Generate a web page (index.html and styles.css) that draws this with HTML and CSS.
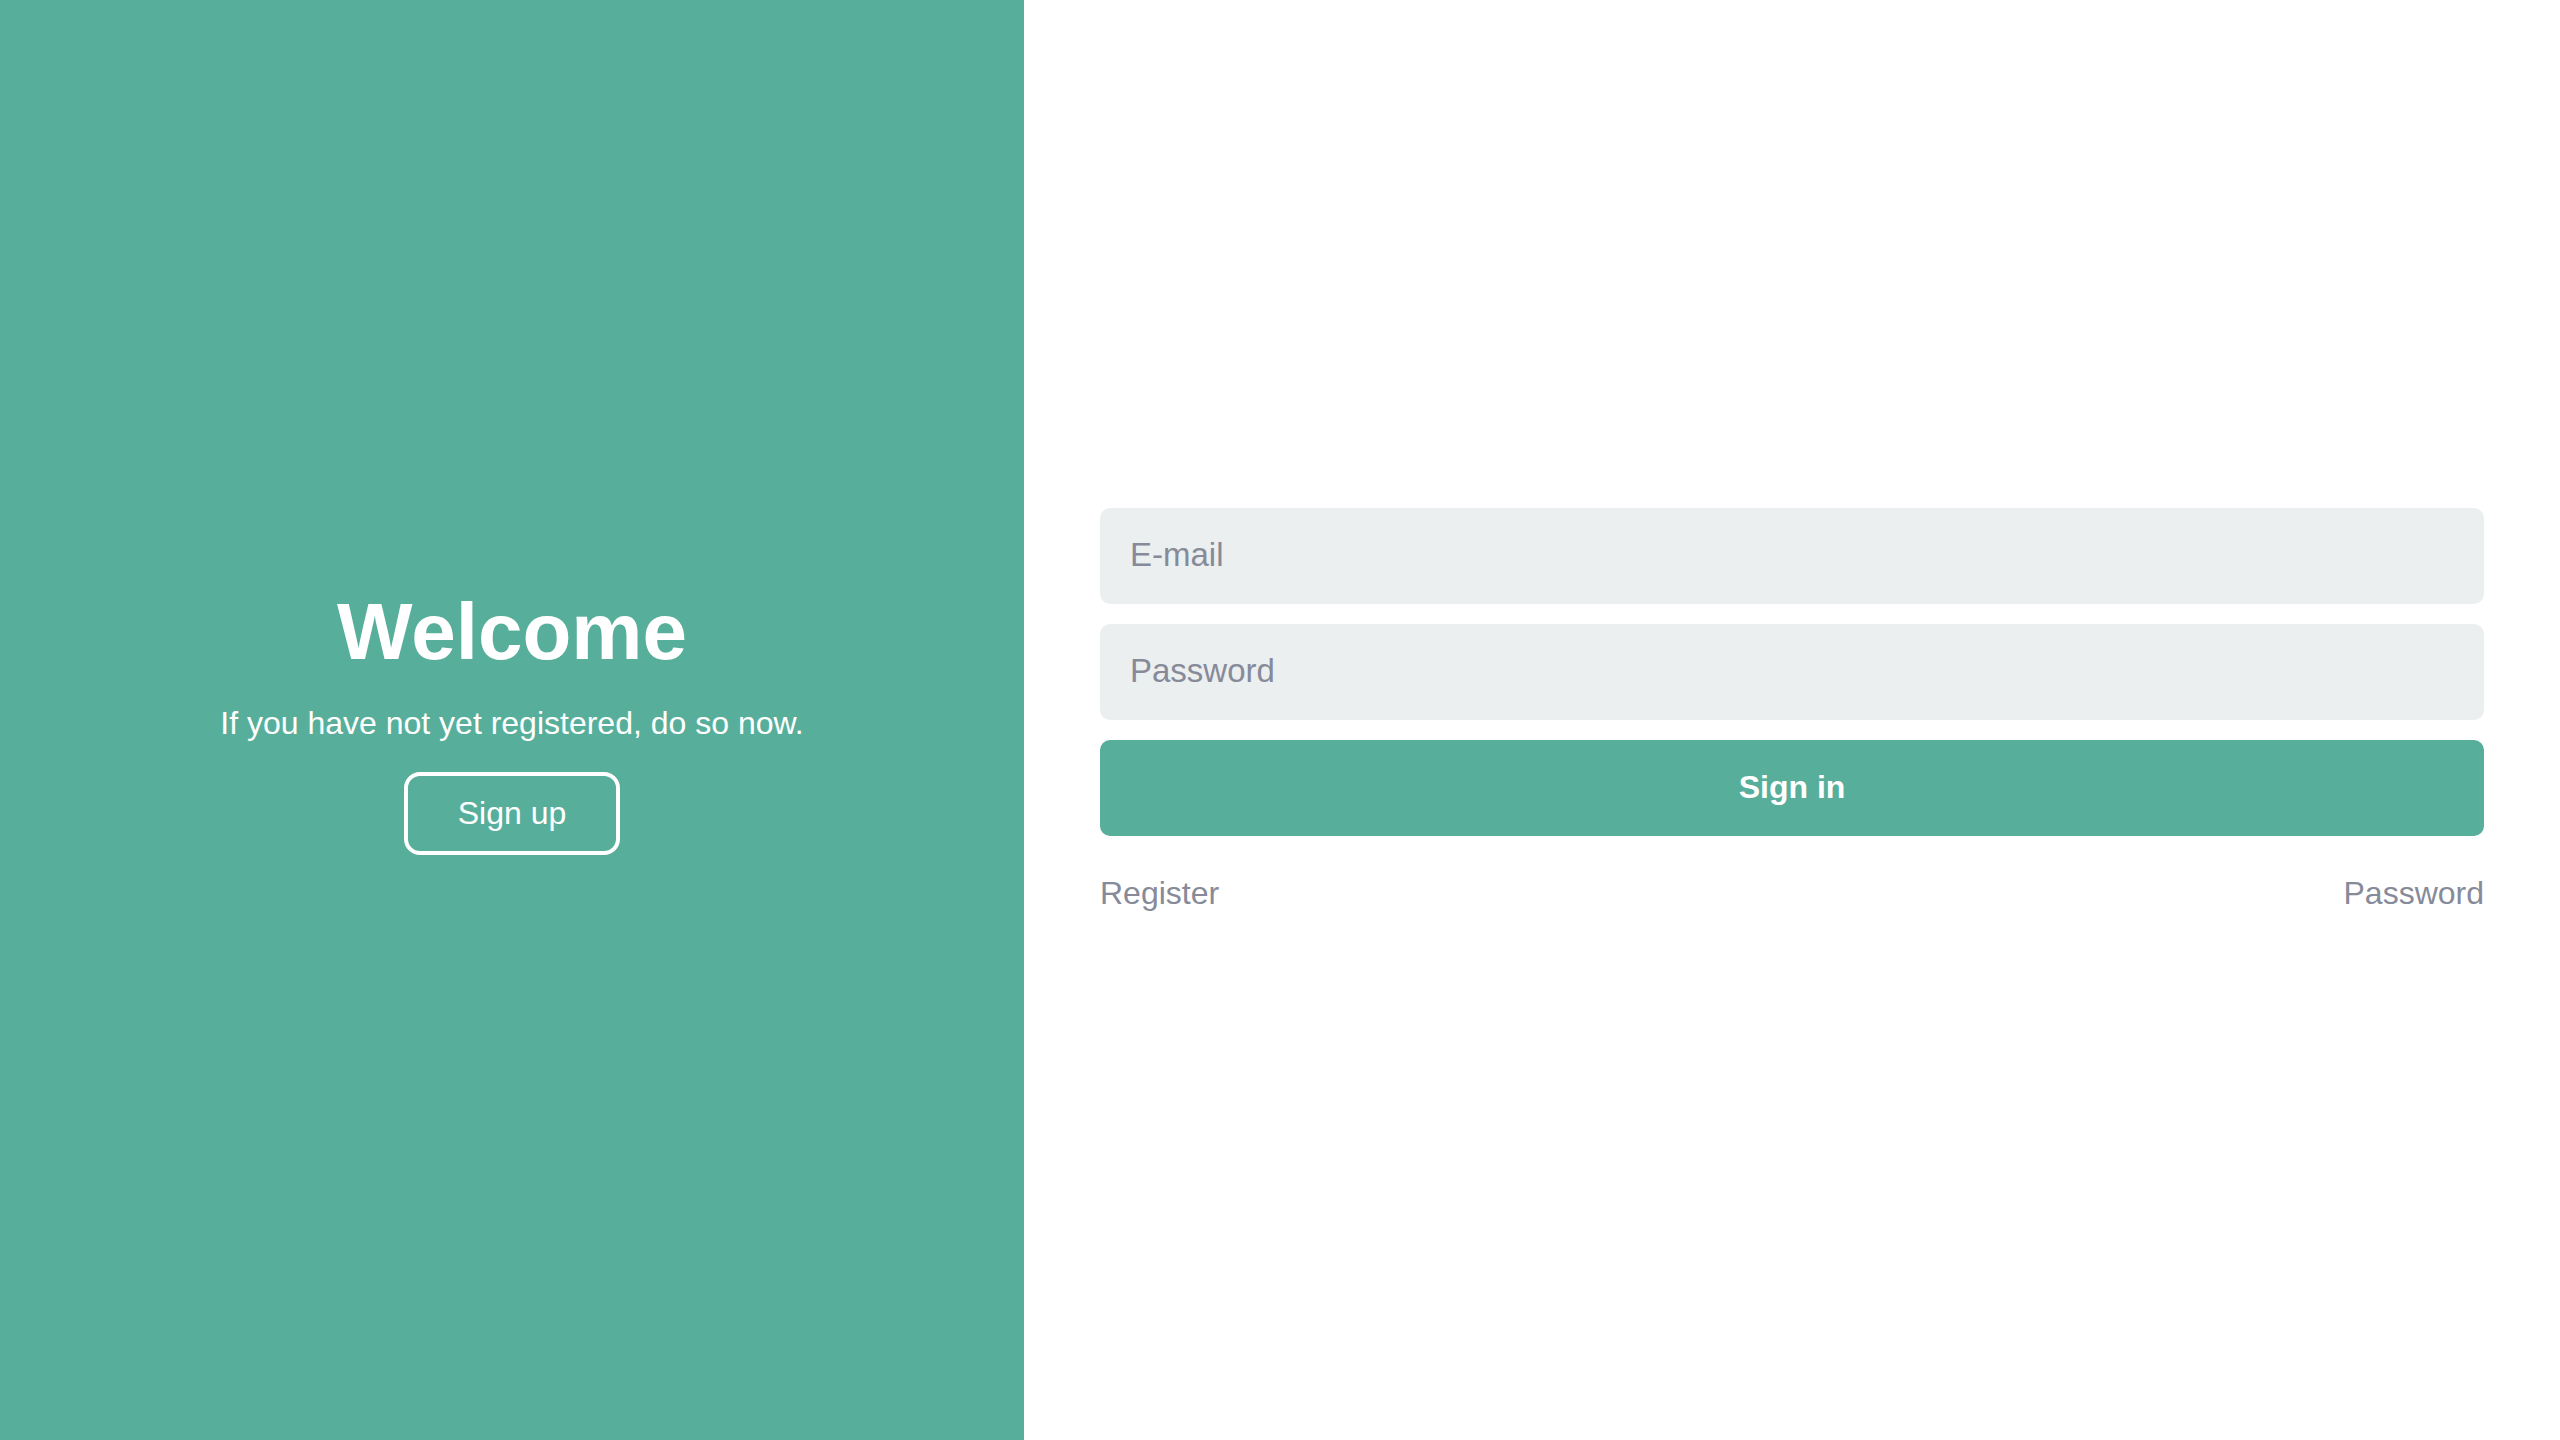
FILE: index.html
```html
<!DOCTYPE html>
<html lang="en">
<head>
<meta charset="utf-8">
<title>Sign in</title>
<link rel="stylesheet" href="styles.css">
</head>
<body>
<div class="page">
  <section class="welcome">
    <h1 class="welcome-title">Welcome</h1>
    <p class="welcome-text">If you have not yet registered, do so now.</p>
    <button class="btn-outline" type="button">Sign up</button>
  </section>
  <section class="auth">
    <form class="auth-form">
      <input class="field" type="email" placeholder="E-mail">
      <input class="field" type="password" placeholder="Password">
      <button class="btn-primary" type="button">Sign in</button>
      <div class="auth-links">
        <a class="auth-link" href="#">Register</a>
        <a class="auth-link" href="#">Password</a>
      </div>
    </form>
  </section>
</div>
</body>
</html>
```
FILE: styles.css
```css
* { box-sizing: border-box; }
html, body { margin: 0; padding: 0; }
body {
  font-family: "Liberation Sans", Arial, sans-serif;
  background: #ffffff;
}
.page {
  display: flex;
  width: 100%;
  height: 100vh;
}
.welcome {
  flex: 0 0 40%;
  background: #57af9b;
  color: #ffffff;
  display: flex;
  flex-direction: column;
  align-items: center;
  justify-content: center;
  text-align: center;
}
.welcome-title {
  margin: 0 0 27px;
  font-size: 80px;
  font-weight: 700;
  line-height: normal;
}
.welcome-text {
  margin: 0 0 30px;
  font-size: 32px;
  line-height: normal;
}
.btn-outline {
  font-family: inherit;
  font-size: 32px;
  color: #ffffff;
  background: transparent;
  border: 4px solid #ffffff;
  border-radius: 16px;
  padding: 19px 50px;
  line-height: normal;
}
.auth {
  flex: 1 1 auto;
  display: flex;
  flex-direction: column;
  justify-content: center;
  padding: 0 76px;
}
.auth-form {
  display: flex;
  flex-direction: column;
  gap: 20px;
  padding-bottom: 20px;
}
.field {
  height: 96px;
  border: 0;
  border-radius: 10px;
  background: #ebeff0;
  padding: 0 30px 2px;
  font-family: inherit;
  font-size: 33px;
  color: #333;
  outline: none;
}
.field::placeholder {
  color: #868a99;
}
.btn-primary {
  height: 96px;
  border: 0;
  border-radius: 10px;
  background: #57af9b;
  color: #ffffff;
  font-family: inherit;
  font-size: 32px;
  font-weight: 700;
  padding: 0 0 2px;
}
.auth-links {
  display: flex;
  justify-content: space-between;
  margin-top: 19px;
}
.auth-link {
  font-size: 32px;
  line-height: normal;
  color: #868a99;
  text-decoration: none;
}
```
